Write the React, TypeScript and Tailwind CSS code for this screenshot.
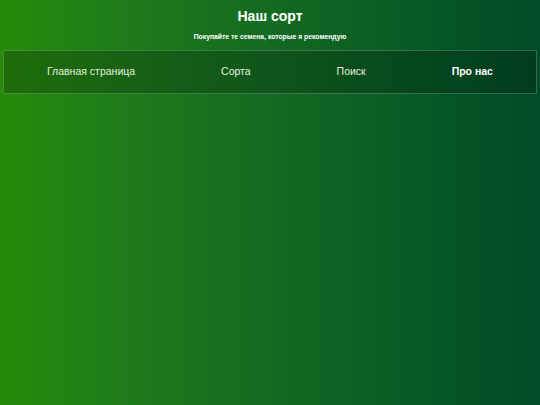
export default function App() {
  const links = ["Главная страница", "Сорта", "Поиск", "Про нас"];
  return (
    <div
      className="min-h-[405px] w-full bg-gradient-to-r from-[#278a08] to-[#004c27] text-white"
      style={{ fontFamily: '"Liberation Sans", Arial, sans-serif' }}
    >
      <header className="pt-[7px] text-center">
        <h1 className="text-[14px] font-bold leading-[18px]">Наш сорт</h1>
        <p className="mt-[7px] text-[6.8px] font-bold leading-[9px]">
          Покупайте те семена, которые я рекомендую
        </p>
      </header>
      <nav className="mx-[3px] mt-[9px] flex h-[44px] items-center justify-around border border-white/20 bg-black/20">
        {links.map((l, i) => (
          <a
            key={l}
            className={
              i === 3
                ? "text-[10.5px] font-bold text-white"
                : "text-[10.5px] text-[#e3f0dc]"
            }
          >
            {l}
          </a>
        ))}
      </nav>
    </div>
  );
}
